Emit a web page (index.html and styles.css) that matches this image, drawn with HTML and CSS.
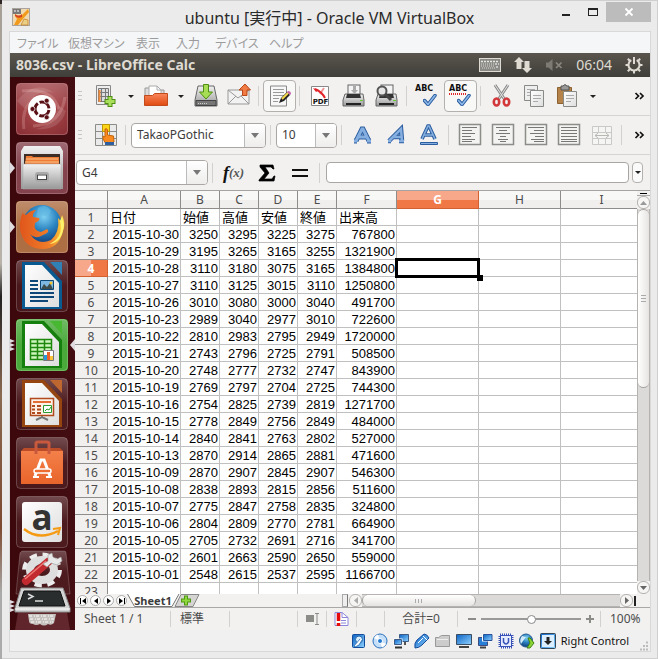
FILE: index.html
```html
<!DOCTYPE html>
<html lang="ja">
<head>
<meta charset="utf-8">
<title>ubuntu [実行中] - Oracle VM VirtualBox</title>
<link rel="stylesheet" href="styles.css">
</head>
<body>
<svg class="defs" aria-hidden="true">
<defs>
<linearGradient id="blue" x1="0" y1="0" x2="0" y2="1"><stop offset="0" stop-color="#a9c8ea"/><stop offset="1" stop-color="#5b8fcb"/></linearGradient>
<linearGradient id="vb" x1="0" y1="0" x2="1" y2="1"><stop offset="0" stop-color="#0a62c4"/><stop offset="1" stop-color="#8fd2ff"/></linearGradient>
<linearGradient id="orange" x1="0" y1="0" x2="0" y2="1"><stop offset="0" stop-color="#f9875c"/><stop offset="1" stop-color="#e04a10"/></linearGradient>
<linearGradient id="metal" x1="0" y1="0" x2="0" y2="1"><stop offset="0" stop-color="#f2f2f2"/><stop offset="1" stop-color="#989898"/></linearGradient>
<linearGradient id="paper" x1="0" y1="0" x2="1" y2="1"><stop offset="0" stop-color="#ffffff"/><stop offset="1" stop-color="#dedede"/></linearGradient>
<linearGradient id="gloss" x1="0" y1="0" x2="0" y2="1"><stop offset="0" stop-color="#fff" stop-opacity=".26"/><stop offset=".5" stop-color="#fff" stop-opacity=".06"/><stop offset="1" stop-color="#fff" stop-opacity=".06"/></linearGradient>
<radialGradient id="dash" cx=".5" cy=".4" r=".7"><stop offset="0" stop-color="#b04648"/><stop offset="1" stop-color="#84242a"/></radialGradient>
<radialGradient id="globe" cx=".55" cy=".3" r=".7"><stop offset="0" stop-color="#7fd0f2"/><stop offset=".5" stop-color="#2a83c0"/><stop offset="1" stop-color="#123f7c"/></radialGradient>
<linearGradient id="fox" x1="0" y1="0" x2="1" y2="0"><stop offset="0" stop-color="#e0561c"/><stop offset=".7" stop-color="#f0802a"/><stop offset="1" stop-color="#fbdc3e"/></linearGradient>
<linearGradient id="bag" x1="0" y1="0" x2="0" y2="1"><stop offset="0" stop-color="#f4804a"/><stop offset="1" stop-color="#e8642a"/></linearGradient>
<symbol id="tile" viewBox="0 0 52 52"><rect x=".5" y=".5" width="51" height="51" rx="4" fill="url(#gloss)" stroke="#fff" stroke-opacity=".22"/></symbol>
<symbol id="print" viewBox="0 0 24 24"><rect x="6" y="1" width="12" height="10" fill="#f4f4f4" stroke="#666"/><path d="M3 10h18l1 6v6H1v-6z" fill="url(#metal)" stroke="#666"/><path d="M5 10h13l1 4H4z" fill="#333"/><path d="M4 19h15v2H4z" fill="#222"/><path d="M18 16h3v1h-3z" fill="#6c3"/></symbol>
<symbol id="check" viewBox="0 0 14 12"><path d="M1.500 6.500l3.500 4L12 1.500" fill="none" stroke="#28599b" stroke-width="3.500" stroke-linecap="round"/><path d="M1.500 6.500l3.500 4L12 1.500" fill="none" stroke="#8db9ea" stroke-width="1.600" stroke-linecap="round"/></symbol>
<symbol id="frame" viewBox="0 0 24 24"><rect x="1.500" y="1.500" width="21" height="20" fill="#f3f3f1" stroke="#8b8d88" stroke-width="1.500"/></symbol>
</defs>
</svg>

<div class="window">
  <header class="titlebar">
    <svg class="app-icon" width="18" height="18" viewBox="0 0 18 18"><rect x=".5" y=".5" width="17" height="17" fill="#f0d9b0" stroke="#a9a39b"/><path d="M1 1h8v5H1z" fill="#777"/><path d="M2 3h2M5 3h2" stroke="#fff"/><path d="M3 8q5 3 8-2l5-5 1 3-7 8-4 5H2l3-6z" fill="#f19a1c"/><path d="M3 6q4 3 7 0v3q-4 2-7-1z" fill="#d5421c"/><path d="M9 17l3-6 4 1v5z" fill="#ead086" stroke="#c47a20" stroke-width=".7"/></svg>
    <h1>ubuntu [実行中] - Oracle VM VirtualBox</h1>
    <div class="window-buttons">
      <button aria-label="最小化"><svg width="12" height="12"><path d="M2 9h8" stroke="#222" stroke-width="2"/></svg></button>
      <button aria-label="最大化"><svg width="12" height="12"><path d="M1.500 2v8M10.500 2v8M1 9.500h10" fill="none" stroke="#222"/><path d="M1 3h10" stroke="#222" stroke-width="2"/></svg></button>
      <button class="close" aria-label="閉じる"><svg width="10" height="10"><path d="M1.500 1.500l7 7M8.500 1.500l-7 7" stroke="#fff" stroke-width="1.800"/></svg></button>
    </div>
  </header>

  <div class="client">
    <nav class="menubar">
      <button>ファイル</button><button>仮想マシン</button><button>表示</button><button>入力</button><button>デバイス</button><button>ヘルプ</button>
    </nav>

    <div class="panel">
      <h2>8036.csv - LibreOffice Calc</h2>
      <div class="indicators">
        <svg width="22" height="14"><rect x=".5" y=".5" width="21" height="13" fill="#8a8a86" stroke="#dfdbd2"/><path d="M2 3.500h18" stroke="#e8e6e0" stroke-width="1.500" stroke-dasharray="2 1"/><path d="M2 6h13M2 8h13M3 10h13" stroke="#d8d5cd" stroke-dasharray="1 1"/><path d="M16 6h4M17 9h3" stroke="#fff" stroke-dasharray="2 1"/></svg>
        <svg width="18" height="18" fill="#dfdbd2"><path d="M5 1l5 5H7.500v7h-5V6H0zM13 17l-5-5h2.500V5h5v7H18z"/></svg>
        <svg width="18" height="14"><path d="M1 4.500h2.500L7.500 1v12L3.500 9.500H1z" fill="#7d7a73"/><path d="M11 4.500l5.500 5.500M16.500 4.500L11 10" stroke="#8a8780" stroke-width="1.700"/></svg>
        <time>06:04</time>
        <svg width="18" height="18" viewBox="0 0 18 18" fill="none" stroke="#dfdbd2"><path d="M6.300 4.200a5.500 5.500 0 1 0 5.400 0" stroke-width="2"/><path d="M9 1v7" stroke-width="2"/><path d="M2.800 2.800l2 2M15.200 2.800l-2 2M.500 9h3M14.500 9h3M2.800 15.200l2-2M15.200 15.200l-2-2M9 14.500v3" stroke-width="2"/></svg>
      </div>
    </div>

    <div class="desktop">
      <aside class="launcher">
        <button aria-label="Dash"><svg width="65" height="52"><rect x="6" width="52" height="52" rx="4" fill="url(#dash)"/><g fill="none" stroke="#e9b0ae" stroke-opacity=".28" stroke-width="3"><path d="M12 8q30-4 37 18M55 14q-4 28-32 29M14 46q-4-26 18-33"/></g><path d="M7 18Q24-4 44 10Q26 4 15 26zM56 28Q50 48 26 46Q45 42 48 22z" fill="#fff" opacity=".12"/><use href="#tile" x="6" width="52" height="52"/><circle cx="32" cy="26" r="14" fill="#fff"/><circle cx="32" cy="26" r="7" fill="none" stroke="#5a1116" stroke-width="3" stroke-dasharray="12.660 2" stroke-dashoffset="-1"/><g fill="#5a1116" stroke="#fff" stroke-width=".7"><circle cx="22.500" cy="26" r="2.500"/><circle cx="36.700" cy="17.700" r="2.500"/><circle cx="36.700" cy="34.300" r="2.500"/></g></svg></button>
        <button aria-label="ファイル"><svg width="65" height="52"><path d="M0 20l5 6-5 6z" fill="#dfdbe0"/><rect x="6" width="52" height="52" rx="4" fill="#7c3642"/><use href="#tile" x="6" width="52" height="52"/><path d="M14 4h36l3 5v38H11V9z" fill="url(#metal)"/><path d="M14 12h36v12H14z" fill="#3d2d27"/><path d="M16 14h6l1 1h26v8H15z" fill="#ef7b34"/><path d="M16 17h32M15 20h34" stroke="#f9c68f"/><path d="M13 22h38v25H13z" fill="url(#metal)" stroke="#a8a8a8" stroke-width=".5"/><rect x="26" y="31" width="12" height="8" rx="2" fill="#ddd" stroke="#aaa" stroke-width="2"/><rect x="27.500" y="33" width="9" height="4.500" fill="#fff" stroke="#444"/></svg></button>
        <button aria-label="Firefox"><svg width="65" height="52"><path d="M0 20l5 6-5 6z" fill="#dfdbe0"/><rect x="6" width="52" height="52" rx="4" fill="#a86538"/><use href="#tile" x="6" width="52" height="52"/><circle cx="32" cy="23.500" r="19.500" fill="url(#globe)"/><path d="M28 7q8-5 13 3-3 7-9 4-2 8-6 4z" fill="#65bce5" opacity=".6"/><path d="M12 12l4 2q5-5 10-5-4 4-3 7l6 1q2 2-4 5-2 8 6 9l6-3q4 3-4 6-8 5-13-1 8 12 21 6 9-8 7-22l3 3 1-6q4 8 1 16-4 18-21 18-19-1-22-20-1-9 3-17z" fill="url(#fox)"/><path d="M50 20q4 17-11 23 13-1 15-19l-2-9z" fill="#fff06c"/></svg></button>
        <button aria-label="Writer"><svg width="65" height="52"><use href="#tile" x="6" width="52" height="52"/><path d="M12 2h22l18 19v28H12z" fill="#0a5a92"/><path d="M40 2h12v13z" fill="#3080b5"/><path d="M15 5h17l17 18v24H15z" fill="url(#paper)"/><path d="M20 21h8M20 25h8M20 29h8M20 33h24M20 37h24M20 41h18" stroke="#0c4777" stroke-width="2"/><path d="M30.500 20.500h13v9h-13z" fill="#7eb7df" stroke="#0c4777"/><path d="M31 29l3-5 3 3 3-4 3 6z" fill="#3e4c4b"/><circle cx="41" cy="23" r="1.500" fill="#f5c12b"/></svg></button>
        <button aria-label="Calc"><svg width="65" height="52"><path d="M0 20l5 2-5 2zM0 24l5 2-5 2zM0 28l5 2-5 2zM65 20l-5 6 5 6z" fill="#dfdbe0"/><rect x="6" width="52" height="52" rx="4" fill="#3fa42f"/><use href="#tile" x="6" width="52" height="52"/><path d="M12 2h22l18 19v28H12z" fill="#15800e"/><path d="M40 2h12v13z" fill="#48b832"/><path d="M15 5h17l17 18v24H15z" fill="url(#paper)"/><path d="M20.500 20.500h21v20h-21z" fill="#cdf5bc" stroke="#1e870d" stroke-width="1.500"/><path d="M20 24.500h22M20 28.500h22M20 32.500h22M20 36.500h22M27.500 20v21M34.500 20v21" stroke="#1e870d" stroke-width="1.500"/><path d="M33.500 31.500h10v10h-10z" fill="#fff" stroke="#777"/><path d="M35.500 36v5" stroke="#289adb" stroke-width="3"/><path d="M38.500 33v8" stroke="#e9622c" stroke-width="3"/><path d="M41.500 37v4" stroke="#fac43b" stroke-width="3"/></svg></button>
        <button aria-label="Impress"><svg width="65" height="52"><use href="#tile" x="6" width="52" height="52"/><path d="M12 2h22l18 19v28H12z" fill="#964511"/><path d="M40 2h12v13z" fill="#be6730"/><path d="M15 5h17l17 18v24H15z" fill="url(#paper)"/><path d="M20.500 20.500h23v17h-23z" fill="#fff2e8" stroke="#b0491b" stroke-width="1.500"/><path d="M23 24h18" stroke="#e46c35" stroke-width="2"/><path d="M22 28h3M22 31.500h3M22 35h3M27 28h4M27 31.500h4M27 35h4" stroke="#b0491b" stroke-width="2"/><path d="M33.500 27.500h8v7h-8z" fill="#fff" stroke="#299b30"/><path d="M35 33l2-2 2 1 2-3" fill="none" stroke="#299b30"/><path d="M32 38v2M26 42l6-3 6 3" fill="none" stroke="#777" stroke-width="2"/></svg></button>
        <button aria-label="Ubuntu ソフトウェアセンター"><svg width="65" height="52"><use href="#tile" x="6" width="52" height="52"/><path d="M11 14h42v33H11z" fill="url(#bag)"/><path d="M11 14h42l-3-3H14z" fill="#bd4d29"/><path d="M26 17V6q0-1 2-1h9q2 0 2 1v11" fill="none" stroke="#c8593d" stroke-width="3"/><path d="M25 39l6-16h3l6 16" fill="none" stroke="#fff" stroke-width="3"/><rect x="24" y="32" width="17" height="4" rx="2" fill="#ef6c31" stroke="#fff" stroke-width="1.500"/><path d="M23 40h6M36 40h6" stroke="#fff" stroke-width="2"/></svg></button>
        <button aria-label="Amazon"><svg width="65" height="52"><use href="#tile" x="6" width="52" height="52"/><rect x="12" y="6" width="40" height="40" rx="3" fill="url(#paper)"/><text x="32" y="34" class="amazon-letter">a</text><path d="M14 33q15 12 34 2" fill="none" stroke="#f59a13" stroke-width="2.500"/><path d="M43 33l7-1-2 7" fill="none" stroke="#f59a13" stroke-width="2"/></svg></button>
        <div class="folded">
          <button aria-label="システム設定"><svg width="65" height="33"><path d="M12-4h42q2 0 2 2l4 41H6l4-41z" fill="url(#gloss)" stroke="#fff" stroke-opacity=".2"/><ellipse cx="32" cy="15" rx="17" ry="14.500" fill="none" stroke="#ececec" stroke-width="6" stroke-dasharray="7 5.400"/><ellipse cx="32" cy="15" rx="12" ry="10" fill="none" stroke="#dedede" stroke-width="8"/><path d="M16 26L38 7" stroke="#c32a30" stroke-width="8" stroke-linecap="round"/><path d="M15 24L36 6" stroke="#ed7b76" stroke-width="1.500"/><path d="M37 12l4-4 6 2 5-4-1-4-4 2-4-2-1-4-4 2v6l-5 3z" fill="#e8e8e8" stroke="#999" stroke-width=".6"/></svg></button>
          <button aria-label="端末"><svg width="65" height="42"><path d="M8 24h49l3 18H5z" fill="#8a4a50" opacity=".45"/><path d="M0 12l5 2-5 2zM0 16l5 2-5 2zM0 20l5 2-5 2z" fill="#dfdbe0"/><path d="M11 0h42l7 20v4H5v-4z" fill="#d3d3d3" stroke="#888"/><path d="M14 3h36l5 15H9z" fill="#292d2e" stroke="#101010"/><path d="M5 21h55" stroke="#fff"/><path d="M18 6l5 2.500-5 2.500" fill="none" stroke="#ddd" stroke-width="1.500"/><path d="M25 13h8" stroke="#ddd" stroke-width="1.500"/><path d="M18 26h28l-2 9q-3 3-6 1-4 3-8 0-4 2-7 0-4 0-4-3z" fill="#c6c2c0"/><path d="M19 28h25M20 31h24M21 34h22" stroke="#fff" stroke-dasharray="3 2 1 1"/></svg></button>
        </div>
      </aside>

      <main class="calc">
        <div class="toolbar">
          <span class="grip"></span>
          <button aria-label="新規"><svg width="24" height="24"><path d="M2.500 1.500h14v19h-14z" fill="#eee" stroke="#888"/><path d="M4.500 4.500h10v13h-10z" fill="#ddd" stroke="#777"/><path d="M4 8.500h11M4 12.500h11M7.500 4v14M11.500 4v14" stroke="#777"/><path d="M5.500 6v12" stroke="#ef8a3b" stroke-width="2"/><path d="M16 12v11M10.500 17.500h11" stroke="#4f8e12" stroke-width="5"/><path d="M16 13v9M11.500 17.500h9" stroke="#a9df5a" stroke-width="3"/></svg></button>
          <button class="drop" aria-label="新規の種類"></button>
          <button aria-label="開く"><svg width="26" height="24"><path d="M2 12V4h6l1 2h12v6z" fill="#ddd" stroke="#999"/><path d="M6 2h8l4 4v9H6z" fill="#fff" stroke="#aaa"/><path d="M14 2v4h4" fill="none" stroke="#aaa"/><path d="M1.500 11.500h8l2-2h13v12h-23z" fill="url(#orange)" stroke="#c24b1b"/></svg></button>
          <button class="drop" aria-label="最近使ったファイル"></button>
          <button aria-label="保存"><svg width="24" height="24"><path d="M4 2h16l3 14v6H1v-6z" fill="url(#metal)" stroke="#666"/><path d="M2 16.500h20v5H2z" fill="#777" stroke="#444"/><path d="M4 19.500h9" stroke="#ccc" stroke-dasharray="1 1"/><path d="M9.500.500h5V8h4L12 15 5.500 8h4z" fill="#a7dc55" stroke="#4f8f13"/></svg></button>
          <button aria-label="メールで送信"><svg width="24" height="24"><path d="M1 6h21v14H1z" fill="#f2f2f2" stroke="#999"/><path d="M1 6l10 8L22 6M1 20l8-8M22 20l-8-8" fill="none" stroke="#999"/><path d="M15.500 11.500V6H12l6-6 5.500 6H20v5.500z" fill="#f07b45" stroke="#b94718"/></svg></button>
          <span class="sep"></span>
          <button class="on" aria-label="編集"><svg width="24" height="24"><path d="M2.500 2h16v20h-16z" fill="#f7f7f7" stroke="#888"/><path d="M5 5.500h11M5 8.500h11M5 11.500h11M5 14.500h6M5 17.500h5" stroke="#999"/><path d="M11 19l2-5 6-6 3 3-6 6z" fill="#222"/><path d="M14 15l6-6" stroke="#f5d84c" stroke-width="2"/><path d="M19 8l1-1q3 0 3 3l-1 1z" fill="#c564a8"/></svg></button>
          <span class="sep"></span>
          <button aria-label="PDF"><svg width="24" height="24"><path d="M2.500 2.500h17v19h-17z" fill="#fff" stroke="#888"/><path d="M6 5q7 3 10 9" fill="none" stroke="#e0252b" stroke-width="2"/><path d="M11 10l4-6" stroke="#e0252b" stroke-opacity=".5" stroke-width="2"/><path d="M4 4l6 2-3 2z" fill="#e0252b"/><text x="11.500" y="20" class="pdf-label">PDF</text></svg></button>
          <button aria-label="印刷"><svg width="24" height="24"><use href="#print" width="24" height="24"/><path d="M11 2h3v4h2l-3.500 4L9 6h2z" fill="#aaa"/></svg></button>
          <button aria-label="印刷プレビュー"><svg width="24" height="24"><use href="#print" width="24" height="24"/><circle cx="7" cy="7" r="4.500" fill="#e6e6e6" stroke="#555" stroke-width="2"/><path d="M10 10l6 6" stroke="#444" stroke-width="3"/></svg></button>
          <span class="sep"></span>
          <button class="abc" aria-label="スペルチェック"><span>ABC</span><svg width="22" height="14"><use href="#check" x="8" y="1" width="14" height="12"/></svg></button>
          <button class="abc on" aria-label="自動スペルチェック"><span>ABC</span><svg width="22" height="14"><path d="M0 1h17" stroke="#e02828" stroke-width="2" stroke-dasharray="1 1"/><use href="#check" x="8" y="1" width="14" height="12"/></svg></button>
          <span class="sep"></span>
          <button aria-label="切り取り"><svg width="24" height="24"><path d="M5 1l10 15M18 1L8 16" stroke="#8b8b8b" stroke-width="3"/><path d="M5 1l10 15M18 1L8 16" stroke="#e4e4e4"/><ellipse cx="6.500" cy="18" rx="2.700" ry="3.500" fill="none" stroke="#d2383a" stroke-width="2.600"/><ellipse cx="16.500" cy="18" rx="2.700" ry="3.500" fill="none" stroke="#d2383a" stroke-width="2.600"/></svg></button>
          <button aria-label="コピー"><svg width="24" height="24"><path d="M1.500 1.500h13v15h-13z" fill="#eee" stroke="#888a85"/><path d="M4 5.500h8M4 8.500h8M4 11.500h4" stroke="#aaa"/><path d="M7.500 6.500h13v16h-13z" fill="url(#paper)" stroke="#888a85"/><path d="M10 11.500h8M10 14.500h8M10 17.500h5" stroke="#aaa"/></svg></button>
          <button aria-label="貼り付け"><svg width="24" height="24"><path d="M1.500 3.500h14v16h-14z" fill="#b5834a" stroke="#8c6230"/><path d="M5 2h2q2-3 4 0h2v4H5z" fill="#999" stroke="#555"/><path d="M7.500 7.500h13v15h-13z" fill="url(#paper)" stroke="#888a85"/><path d="M10 11.500h8M10 14.500h8M10 17.500h5" stroke="#aaa"/></svg></button>
          <button class="drop" aria-label="形式を選択して貼り付け"></button>
          <button class="more" aria-label="その他"><svg width="9" height="8"><path d="M.500 1l3 3-3 3M5 1l3 3-3 3" fill="none" stroke="#111" stroke-width="1.700"/></svg></button>
        </div>

        <div class="toolbar">
          <span class="grip"></span>
          <button aria-label="スタイルと書式設定"><svg width="24" height="24"><path d="M1.500 1.500h21v21h-21z" fill="#eaeaea" stroke="#8b8b88"/><path d="M1 8.500h22M1 15.500h22M8.500 1v22M15.500 1v22" stroke="#8b8b88"/><path d="M8.500 1.500h7v7h-7z" fill="#ffd51c" stroke="#bb9700"/><path d="M11 6q2-1 2.500 1v5l6 1 .5 6-3 2h-5l-3-5V13l2 1z" fill="#f98a20" stroke="#c5640a"/><path d="M11 19h9v3h-9z" fill="#2f5f9f"/></svg></button>
          <span class="sep"></span>
          <div class="combo font-name"><input aria-label="フォント名" value="TakaoPGothic"><button aria-label="フォント一覧"></button></div>
          <span class="sep"></span>
          <div class="combo font-size"><input aria-label="フォントサイズ" value="10"><button aria-label="サイズ一覧"></button></div>
          <span class="sep"></span>
          <button aria-label="太字"><svg width="24" height="24"><path d="M3 18h3M16 18h4M5 18l6-12h1l6 12M8 14h7" fill="none" stroke="#2c5d9e" stroke-width="5"/><path d="M3 18h3M16 18h4M5 18l6-12h1l6 12M8 14h7" fill="none" stroke="#85afe0" stroke-width="3"/></svg></button>
          <button aria-label="斜体"><svg width="24" height="24"><path d="M5 18L17 6l1 12M9 14h9M4 18h3M15 18h5" fill="none" stroke="#2c5d9e" stroke-width="4.500"/><path d="M5 18L17 6l1 12M9 14h9M4 18h3M15 18h5" fill="none" stroke="#85afe0" stroke-width="2.500"/></svg></button>
          <button aria-label="下線"><svg width="24" height="24"><path d="M5 16l6-13h1l6 13M7 12h9" fill="none" stroke="#2c5d9e" stroke-width="3.600"/><path d="M5 16l6-13h1l6 13M7 12h9" fill="none" stroke="#85afe0" stroke-width="1.600"/><path d="M3.500 19.500h17v2h-17z" fill="#85afe0" stroke="#2c5d9e"/></svg></button>
          <span class="sep"></span>
          <button aria-label="左揃え"><svg width="24" height="24"><use href="#frame" width="24" height="24"/><path d="M4 4.500h15M4 7.500h10M4 10.500h13M4 13.500h9M4 16.500h13M4 18.500h10" stroke="#777"/></svg></button>
          <button aria-label="中央揃え"><svg width="24" height="24"><use href="#frame" width="24" height="24"/><path d="M5 4.500h14M8 7.500h8M5 10.500h14M9 13.500h6M7 16.500h10M9 18.500h6" stroke="#777"/></svg></button>
          <button aria-label="右揃え"><svg width="24" height="24"><use href="#frame" width="24" height="24"/><path d="M4 4.500h16M10 7.500h10M6 10.500h14M11 13.500h9M7 16.500h13M10 18.500h10" stroke="#777"/></svg></button>
          <button aria-label="両端揃え"><svg width="24" height="24"><use href="#frame" width="24" height="24"/><path d="M4 4.500h16M4 7.500h16M4 10.500h16M4 13.500h16M4 16.500h16M4 18.500h16" stroke="#777"/></svg></button>
          <button aria-label="セルの結合" disabled><svg width="24" height="24"><path d="M2.500 3.500h19v18h-19zM2 9.500h20M2 15.500h20M8.500 3v6M15.500 3v6M8.500 16v6M15.500 16v6" fill="#f5f5f4" stroke="#c9c9c7"/><path d="M5 12.500h14M8 10l-3 2.500L8 15M16 10l3 2.500-3 2.500" fill="none" stroke="#b7b7b4"/></svg></button>
          <span class="sep"></span>
          <button class="more" aria-label="その他"><svg width="9" height="8"><path d="M.500 1l3 3-3 3M5 1l3 3-3 3" fill="none" stroke="#111" stroke-width="1.700"/></svg></button>
        </div>

        <div class="formula">
          <div class="combo name-box"><input aria-label="セル番地" value="G4"><button aria-label="名前一覧"></button></div>
          <span class="sep"></span>
          <button class="fx" aria-label="関数ウィザード"><i>f</i><small>(x)</small></button>
          <button aria-label="合計"><svg width="18" height="18"><path d="M2 1h13l1 4h-1l-2-2H7l4 6-5 6h8l2-3h1l-1 5H1v-1l6-7-5-6z" stroke="#000" stroke-width=".7"/></svg></button>
          <button aria-label="数式"><svg width="18" height="10"><path d="M1 2h16M1 8h16" stroke="#111" stroke-width="2"/></svg></button>
          <span class="sep"></span>
          <input class="formula-line" aria-label="入力行">
          <button class="expand" aria-label="展開"></button>
        </div>

        <div class="sheet">
          <div class="grid">
            <table>
              <colgroup><col class="num"><col class="date"><col class="price"><col class="price"><col class="price"><col class="price"><col class="volume"><col class="wide"><col class="wide"><col class="wide"></colgroup>
              <thead><tr><th></th><th>A</th><th>B</th><th>C</th><th>D</th><th>E</th><th>F</th><th class="active">G</th><th>H</th><th>I</th></tr></thead>
              <tbody>
              <tr class="labels"><th>1<td>日付<td>始値<td>高値<td>安値<td>終値<td>出来高<td><td><td>
              <tr><th>2<td>2015-10-30<td>3250<td>3295<td>3225<td>3275<td>767800<td><td><td>
              <tr><th>3<td>2015-10-29<td>3195<td>3265<td>3165<td>3255<td>1321900<td><td><td>
              <tr><th class="active">4<td>2015-10-28<td>3110<td>3180<td>3075<td>3165<td>1384800<td class="cursor"><td><td>
              <tr><th>5<td>2015-10-27<td>3110<td>3125<td>3015<td>3110<td>1250800<td><td><td>
              <tr><th>6<td>2015-10-26<td>3010<td>3080<td>3000<td>3040<td>491700<td><td><td>
              <tr><th>7<td>2015-10-23<td>2989<td>3040<td>2977<td>3010<td>722600<td><td><td>
              <tr><th>8<td>2015-10-22<td>2810<td>2983<td>2795<td>2949<td>1720000<td><td><td>
              <tr><th>9<td>2015-10-21<td>2743<td>2796<td>2725<td>2791<td>508500<td><td><td>
              <tr><th>10<td>2015-10-20<td>2748<td>2777<td>2732<td>2747<td>843900<td><td><td>
              <tr><th>11<td>2015-10-19<td>2769<td>2797<td>2704<td>2725<td>744300<td><td><td>
              <tr><th>12<td>2015-10-16<td>2754<td>2825<td>2739<td>2819<td>1271700<td><td><td>
              <tr><th>13<td>2015-10-15<td>2778<td>2849<td>2756<td>2849<td>484000<td><td><td>
              <tr><th>14<td>2015-10-14<td>2840<td>2841<td>2763<td>2802<td>527000<td><td><td>
              <tr><th>15<td>2015-10-13<td>2870<td>2914<td>2865<td>2881<td>471600<td><td><td>
              <tr><th>16<td>2015-10-09<td>2870<td>2907<td>2845<td>2907<td>546300<td><td><td>
              <tr><th>17<td>2015-10-08<td>2838<td>2893<td>2815<td>2856<td>511600<td><td><td>
              <tr><th>18<td>2015-10-07<td>2775<td>2847<td>2758<td>2835<td>324800<td><td><td>
              <tr><th>19<td>2015-10-06<td>2804<td>2809<td>2770<td>2781<td>664900<td><td><td>
              <tr><th>20<td>2015-10-05<td>2705<td>2732<td>2691<td>2716<td>341700<td><td><td>
              <tr><th>21<td>2015-10-02<td>2601<td>2663<td>2590<td>2650<td>559000<td><td><td>
              <tr><th>22<td>2015-10-01<td>2548<td>2615<td>2537<td>2595<td>1166700<td><td><td>
              <tr><th>23<td><td><td><td><td><td><td><td><td>
              </tbody>
            </table>
          </div>
          <div class="vscroll">
            <span class="split"></span>
            <button aria-label="上へ"><svg width="7" height="4"><path d="M0 4l3.500-4L7 4z" fill="#999"/></svg></button>
            <span class="track"><span class="thumb"></span></span>
            <button aria-label="下へ"><svg width="7" height="4"><path d="M0 0l3.500 4L7 0z" fill="#666"/></svg></button>
          </div>
        </div>

        <div class="tabs">
          <div class="tab-nav">
            <button aria-label="最初のシート"><svg width="6" height="6"><path d="M6 0v6L2 3zM0 0h1v6H0z"/></svg></button>
            <button aria-label="前のシート"><svg width="6" height="6"><path d="M5 0v6L1 3z"/></svg></button>
            <button aria-label="次のシート"><svg width="6" height="6"><path d="M1 0v6l4-3z"/></svg></button>
            <button aria-label="最後のシート"><svg width="6" height="6"><path d="M0 0v6l4-3zM5 0h1v6H5z"/></svg></button>
          </div>
          <button class="tab"><svg width="52" height="13"><path d="M0 0l7 13h38L52 0z" fill="#fff"/><path d="M.500 0l7 12.500H45L52 0" fill="none" stroke="#777"/></svg><span>Sheet1</span></button>
          <button class="add" aria-label="シートを追加"><svg width="26" height="13"><path d="M7 .500h18l-6 12H1z" fill="#d5d4d2" stroke="#888"/><path d="M12 1.500v10M7 6.500h10" stroke="#4f9a13" stroke-width="4"/><path d="M12 2.500v8M8 6.500h8" stroke="#8fd83e" stroke-width="2"/></svg></button>
          <div class="hscroll">
            <span class="splitter"></span>
            <button aria-label="左へ"><svg width="4" height="7"><path d="M4 0L0 3.500 4 7z" fill="#aaa"/></svg></button>
            <span class="track"><span class="thumb"></span></span>
            <button aria-label="右へ"><svg width="4" height="7"><path d="M0 0l4 3.500L0 7z" fill="#666"/></svg></button>
            <span class="end"></span>
          </div>
        </div>

        <div class="status">
          <span>Sheet 1 / 1</span><span>標準</span><span></span>
          <span class="mid"><svg width="13" height="12"><path d="M0 2h8v7H0z" fill="#8b8b88"/><path d="M9 .500h4M9 11.500h4M11 0v12" stroke="#8b8b88"/></svg></span>
          <span class="mid"><svg width="15" height="16"><path d="M1 1.500h7l6 5v8H1z" fill="#fff" stroke="#8c86dc"/><path d="M8 1.500v5h6M7 9.500h5M7 12h5" fill="none" stroke="#8c86dc"/><path d="M4.500 2v8M4.500 12v3" stroke="#e30b0b" stroke-width="3.500"/></svg></span>
          <span></span><span class="mid">合計=0</span>
          <span class="zoom"><button aria-label="縮小"><svg width="8" height="8"><path d="M0 4h8" stroke="#8b8b88" stroke-width="2"/></svg></button><input type="range" aria-label="ズーム" value="50"><button aria-label="拡大"><svg width="8" height="8"><path d="M0 4h8M4 0v8" stroke="#8b8b88" stroke-width="2"/></svg></button></span>
          <span>100%</span>
        </div>
      </main>
    </div>

    <footer class="vm-status">
      <svg width="16" height="16"><rect x="1.500" y="1.500" width="12" height="13" rx="1" fill="url(#vb)" stroke="#124b9a"/><circle cx="8" cy="6.500" r="3.500" fill="#d8efff" stroke="#2467ad"/><path d="M9 6l-6 7 1 1 4-2 3-5" fill="#fff" stroke="#2467ad" stroke-width=".8"/></svg>
      <svg width="16" height="16"><circle cx="8" cy="8" r="7" fill="#c6dff8" stroke="#2870bb"/><path d="M8 8L2 5a7 7 0 0 1 4-3.500zM8 8l6 3a7 7 0 0 1-4 3.500z" fill="#fff"/><circle cx="8" cy="8" r="2.500" fill="#1d79d1" stroke="#fff"/></svg>
      <svg width="16" height="16"><path d="M6.500 1.500h9v7h-9z" fill="url(#vb)" stroke="#3e5a87"/><path d="M12 9v3" stroke="#555" stroke-width="2"/><path d="M.500 5.500h9v7h-9z" fill="#fff"/><path d="M1.500 6.500h7v5h-7z" fill="url(#vb)" stroke="#3e5a87"/><path d="M2 14.500h7" stroke="#333" stroke-width="2"/></svg>
      <svg width="16" height="16"><path d="M1 15q-1-5 2-8l7-6q3 0 5 4l-7 7q-3 3-7 3z" fill="url(#vb)" stroke="#154b96"/><path d="M9 3l4 4M4 10l5-5" stroke="#fff"/></svg>
      <svg width="16" height="16"><path d="M.500 4.500h3l3-2h8v11H.500z" fill="#ccc" stroke="#999"/><path d="M2 6.500h11" stroke="#eee"/></svg>
      <svg width="16" height="16"><path d="M.500 1.500h15v10H.500z" fill="url(#vb)" stroke="#3b4d63"/><path d="M3 14h10" stroke="#444" stroke-width="2"/></svg>
      <svg width="16" height="16"><path d="M1.500 4.500h9v8h-9z" fill="#287fd8" stroke="#3e4d7e"/><path d="M5 1h10.500v7.500H5z" fill="#fff"/><path d="M6.500 1.500h8.500v6H6.500z" fill="url(#vb)" stroke="#28529a"/><path d="M3 14.500h6" stroke="#444" stroke-width="2"/></svg>
      <svg width="16" height="16"><rect x="2" y="2" width="12" height="12" fill="none" stroke="#3751b8" stroke-width="3" stroke-dasharray="1 1"/><rect x="2.500" y="2.500" width="11" height="11" fill="#e5ecff" stroke="#3751b8"/><path d="M5.500 5v4q2.500 4 5 0V5" fill="none" stroke="#3751b8" stroke-width="1.500"/></svg>
      <svg width="16" height="16"><circle cx="7" cy="7.500" r="6.500" fill="url(#globe)" stroke="#245a93"/><path d="M3 3l4 1-3 4-2 3Q0 7 3 3z" fill="#d1eafa"/><path d="M9 5h2l4 5-4 5H8l3-5z" fill="#8bd735" stroke="#417f16"/></svg>
      <svg width="16" height="16"><rect x=".500" y=".500" width="15" height="15" rx="1" fill="url(#vb)" stroke="#345"/><rect x="2" y="2" width="12" height="12" fill="#dbeeff"/><path d="M6.500 4h3v4H12l-4 4-4-4h2.500z" fill="#222"/></svg>
      <span>Right Control</span>
      <svg class="size-grip" width="10" height="10"><path d="M7 1.500h2M4 5h2M7 5h2M1 8.500h2M4 8.500h2M7 8.500h2" stroke="#bbb" stroke-width="2"/></svg>
    </footer>
  </div>
</div>
</body>
</html>
```
FILE: styles.css
```css
* { box-sizing: border-box; }

body {
  margin: 0;
  font: 12px/16px "Noto Sans", "Noto Sans CJK JP", sans-serif;
  color: #3c3c3c;
  background: linear-gradient(#2c2724 0, #2c2724 4px, #a59f96 4px, #b8b2a8 40%, #222 45%, #8a6a52 60%, #7d4a30 80%, #aaa 90%);
}

button, input {
  font: inherit;
  color: inherit;
  margin: 0;
  padding: 0;
  border: 0;
  background: none;
  min-width: 0;
}

button { display: flex; align-items: center; justify-content: center; flex: none; }
svg { display: block; flex: none; overflow: visible; }
.defs { position: absolute; width: 0; height: 0; }

.window {
  height: 100vh;
  min-height: 400px;
  display: flex;
  flex-direction: column;
  padding: 1px 6px 6px 7px;
  border: 1px solid #cfcfcf;
  border-left: 0;
  margin-left: 2px;
  background: #ebebeb;
}

.titlebar { height: 29px; flex: none; display: flex; align-items: flex-start; padding-left: 3px; }
.app-icon { margin-top: 6px; }
.titlebar h1 { flex: 1; margin: 4px 0 0 77px; font-size: 16px; font-weight: 400; line-height: 24px; text-align: center; color: #2a2a2a; white-space: nowrap; }
.window-buttons { display: flex; }
.window-buttons button { width: 27px; height: 20px; }
.window-buttons .close { width: 45px; background: #bcbcbc; }

.client { flex: 1; min-height: 0; display: flex; flex-direction: column; border: 1px solid #d8d8d8; }

.menubar {
  height: 21px;
  flex: none;
  display: grid;
  grid-template-columns: 51px 68px 40px 39px 54px auto;
  padding-left: 7px;
  background: #f5f6f8;
  color: #9c9c9c;
  font-family: "Noto Sans CJK JP", sans-serif;
  font-feature-settings: "palt";
}
.menubar button { justify-content: flex-start; }

.panel {
  height: 24px;
  flex: none;
  display: flex;
  align-items: center;
  justify-content: space-between;
  padding: 0 7px 0 6px;
  background: linear-gradient(#5a564e, #3f3e39);
  color: #dfdbd2;
}
.panel h2 { margin: 0; font-size: 14px; }
.panel time { font-size: 14px; }
.indicators { display: flex; align-items: center; gap: 13px; }

.desktop { flex: 1; min-height: 0; display: flex; }

.launcher {
  width: 65px;
  flex: none;
  display: flex;
  flex-direction: column;
  gap: 7px;
  padding-top: 6px;
  overflow: hidden;
  background: linear-gradient(90deg, #3c080c, #430d11);
}
.amazon-letter { font: bold 35px "Open Sans", sans-serif; text-anchor: middle; fill: #333; }
.pdf-label { font: bold 7px "DejaVu Sans", sans-serif; text-anchor: middle; fill: #111; }

.calc { flex: 1; min-width: 0; display: flex; flex-direction: column; background: #f2f1f0; }

.toolbar { height: 39px; flex: none; display: flex; align-items: center; border-bottom: 1px solid #d6d4d2; }
.toolbar button, .formula > button { width: 33px; height: 32px; }
.toolbar .grip { width: 14px; height: 10px; flex: none; padding-left: 3px; background: repeating-linear-gradient(#c8c6c4 0 1px, transparent 1px 4px) content-box; background-size: 4px 10px; background-repeat: no-repeat; }
.sep { flex: none; width: 1px; height: 20px; margin: 0 4px 0 3px; background: #d3d1cf; }
.toolbar .on { border: 1px solid #b3b0ad; border-radius: 4px; background: #f8f8f7; }
.toolbar .drop { width: 17px; }
.drop::before, .expand::before, .combo button::before { content: ""; border: 3px solid transparent; border-top-color: #222; border-bottom: 0; }
.toolbar .more { width: 9px; margin: 0 6px 0 auto; }
.toolbar .abc { flex-direction: column; align-items: flex-start; padding-left: 4px; font: bold 8px/8px "DejaVu Sans", sans-serif; color: #111; }

.combo { display: flex; flex: none; height: 25px; margin: 0 1px; border: 1px solid #a9a6a3; border-radius: 4px; background: #fff; overflow: hidden; }
.combo input { flex: 1; padding-left: 5px; }
.toolbar .combo button, .combo button { width: 21px; height: 100%; border-left: 1px solid #bbb; background: linear-gradient(#fff, #eeedec); }
.combo button::before { border-width: 5px 4px 0; border-top-color: #777; }
.font-name { width: 135px; }
.font-size { width: 61px; }
.name-box { width: 132px; }

.formula { height: 35px; flex: none; display: flex; align-items: center; }
.fx { font: italic bold 18px/20px "Liberation Serif", serif; color: #111; }
.fx small { font-size: 13px; color: #555; }
.formula-line { flex: 1; height: 21px; margin-left: 2px; padding: 0 5px; border: 1px solid #a9a6a3; border-radius: 4px; background: #fff; }
.formula .expand { width: 11px; height: 21px; margin: 0 7px 0 3px; border: 1px solid #b3b0ad; border-radius: 4px; background: #fafafa; }

.sheet { flex: 1; min-height: 0; display: flex; border-top: 1px solid #a5a3a1; }
.grid { flex: 1; min-width: 0; overflow: hidden; background: #fff; }

table { width: 568px; table-layout: fixed; border-collapse: separate; border-spacing: 0; }
.num { width: 33px; }
.date { width: 73px; }
.price { width: 39px; }
.volume { width: 60px; }
.wide { width: 82px; }
th, td { height: 17px; padding: 2px 0 0; border: solid #c0c0c0; border-width: 0 1px 1px 0; line-height: 14px; white-space: nowrap; }
th { border-color: #8f8d8b; background: #f1f0ef; font-weight: 400; color: #4c4c4c; }
thead th { height: 18px; padding: 0; line-height: 17px; background: linear-gradient(#f8f8f7 50%, #f0efee 50%); }
td { padding-right: 1px; text-align: right; font-family: "Liberation Sans", "Noto Sans CJK JP", sans-serif; font-size: 13px; color: #000; }
.labels td { padding-left: 2px; text-align: left; }
th.active { background: linear-gradient(90deg, #f7a88a 50%, #f07746 50%); border-color: #d5602f; color: #fff; font-weight: 700; }
thead th.active { background: linear-gradient(#f7a88a 50%, #f07746 50%); }
.cursor { position: relative; }
.cursor::before { content: ""; position: absolute; inset: -2px; border: 3px solid #000; }
.cursor::after { content: ""; position: absolute; right: -5px; bottom: -5px; width: 6px; height: 6px; background: #000; }

.vscroll { width: 13px; flex: none; display: flex; flex-direction: column; }
.vscroll .split { height: 5px; border-bottom: 1px solid #aaa; background: linear-gradient(#000, #000) center 2px / 7px 1px no-repeat; }
.vscroll button { height: 13px; border: 1px solid #b5b2af; border-radius: 6px; background: #f6f5f4; }
.vscroll .track { flex: 1; border: solid #b5b2af; border-width: 0 1px; background: #dcdad8; }
.vscroll .thumb { display: block; height: 48%; border: 1px solid #a5a29f; border-width: 1px 0; border-radius: 6px; background: repeating-linear-gradient(#aaa 0 1px, transparent 1px 3px) center / 5px 7px no-repeat, linear-gradient(90deg, #fff, #e6e4e2); }

.tabs { height: 14px; flex: none; display: flex; border-bottom: 1px solid #aaa8a6; }
.tab-nav { display: flex; gap: 2px; padding: 1px 0 0 2px; }
.tab-nav button { width: 11px; height: 11px; border: 1px solid #aaa; border-radius: 6px; background: #fff; }
.tab { position: relative; font-size: 11px; font-weight: 700; line-height: 13px; }
.tab span { position: absolute; inset: 0; }
.add { margin-left: -5px; }
.hscroll { display: flex; flex: 1; max-width: 308px; margin-left: auto; }
.splitter { width: 6px; margin-right: 1px; border: 1px solid #aaa; border-right-color: #777; background: #eee; }
.hscroll button { width: 13px; border: 1px solid #b5b2af; border-radius: 6px; background: #f6f5f4; }
.hscroll .track { flex: 1; border: solid #b5b2af; border-width: 1px 0; background: #dcdad8; }
.hscroll .thumb { display: block; width: 44%; height: 100%; border: 1px solid #a5a29f; border-width: 0 1px; border-radius: 6px; background: repeating-linear-gradient(90deg, #aaa 0 1px, transparent 1px 3px) center / 7px 4px no-repeat, linear-gradient(#fff, #e6e4e2); }
.hscroll .end { width: 2px; margin: 2px 14px 1px 1px; background: #222; }

.status {
  height: 22px;
  flex: none;
  display: grid;
  grid-template-columns: 96px 59px 68px 29px 30px 28px 73px minmax(0, 1fr) 49px;
  align-items: center;
  color: #4c4c4c;
}
.status > span { height: 16px; padding-left: 9px; border-right: 1px solid #d3d1cf; white-space: nowrap; }
.status > span:last-child { border: 0; }
.status > .mid { display: flex; align-items: center; justify-content: center; padding: 0; }
.status > .zoom { display: flex; align-items: center; gap: 5px; padding: 0 6px 0 10px; }
.zoom button { width: 8px; height: 16px; }
.zoom input { flex: 1; width: 0; height: 16px; appearance: none; background: linear-gradient(#999, #999) center / 100% 2px no-repeat; }
.zoom input::-webkit-slider-thumb { appearance: none; width: 9px; height: 9px; border: 1px solid #888; border-radius: 50%; background: #fff; }

.vm-status { height: 21px; flex: none; display: flex; align-items: center; justify-content: flex-end; gap: 5px; padding-right: 1px; background: #f0f0f0; color: #111; font-size: 11px; }
.size-grip { align-self: flex-end; margin-left: 5px; }
```
